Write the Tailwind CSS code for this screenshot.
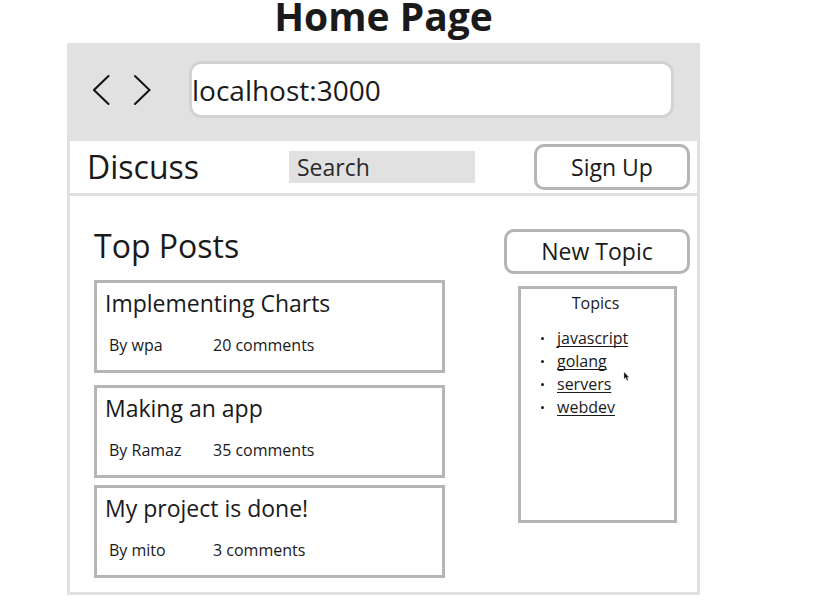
<!DOCTYPE html>
<html lang="en">
<head>
<meta charset="utf-8">
<meta name="viewport" content="width=device-width, initial-scale=1">
<title>Home Page</title>
<script src="https://cdn.jsdelivr.net/npm/@tailwindcss/browser@4"></script>
</head>
<body class="bg-white pl-[67px] pr-[130px] font-['Open_Sans',sans-serif] text-[#1a1a1a]">
  <h1 class="pb-[11px] text-center text-[39px] leading-8 font-bold">Home Page</h1>

  <div class="border-3 border-[#e1e1e1]">
    <header class="flex items-center bg-[#e1e1e1] pt-[15px] pr-[23px] pb-[23px] pl-[23px]">
      <button type="button" aria-label="Back" class="mr-6 shrink-0">
        <svg class="h-8 w-[17px]" viewBox="0 0 17 32" fill="none" stroke="#111" stroke-width="2" stroke-linecap="round"><path d="M15.500 2 1 16 15.500 30"/></svg>
      </button>
      <button type="button" aria-label="Forward" class="mr-[38px] shrink-0">
        <svg class="h-8 w-[17px]" viewBox="0 0 17 32" fill="none" stroke="#111" stroke-width="2" stroke-linecap="round"><path d="M1 2 15.500 16 1 30"/></svg>
      </button>
      <input type="text" aria-label="Address" value="localhost:3000" class="h-[57px] min-w-0 flex-1 rounded-xl border-3 border-[#d3d3d3] bg-white text-[28px] outline-none">
    </header>

    <nav class="flex items-center border-b-3 border-[#e1e1e1] bg-white py-[3px] pr-[7px] pl-[17px]">
      <a href="#" class="w-[202px] shrink-0 text-[32px] leading-10">Discuss</a>
      <input type="search" aria-label="Search" placeholder="Search" class="h-8 w-[186px] bg-[#e1e1e1] px-2 text-[23px] outline-none placeholder:text-[#2a2a2a]">
      <button type="button" class="ml-auto h-[46px] w-[156px] shrink-0 rounded-[10px] border-3 border-[#b5b5b5] text-[23px]">Sign Up</button>
    </nav>

    <div class="flex items-start gap-[59px] pt-[30px] pr-[7px] pb-[14px] pl-6">
      <main class="min-w-0 flex-1">
        <h2 class="pb-[14px] text-[32px] leading-10">Top Posts</h2>
        <article class="mb-3 border-3 border-[#b5b5b5] px-2 pt-1 pb-[13px]">
          <h3 class="text-[23px] leading-8">Implementing Charts</h3>
          <p class="mt-[14px] flex pl-1 text-base"><span class="w-[104px]">By wpa</span><span>20 comments</span></p>
        </article>
        <article class="mb-[7px] border-3 border-[#b5b5b5] px-2 pt-1 pb-[13px]">
          <h3 class="text-[23px] leading-8">Making an app</h3>
          <p class="mt-[14px] flex pl-1 text-base"><span class="w-[104px]">By Ramaz</span><span>35 comments</span></p>
        </article>
        <article class="border-3 border-[#b5b5b5] px-2 pt-1 pb-[13px]">
          <h3 class="text-[23px] leading-8">My project is done!</h3>
          <p class="mt-[14px] flex pl-1 text-base"><span class="w-[104px]">By mito</span><span>3 comments</span></p>
        </article>
      </main>

      <aside class="w-[186px] shrink-0 pt-[3px]">
        <button type="button" class="h-[45px] w-full rounded-[10px] border-3 border-[#b5b5b5] text-[23px]">New Topic</button>
        <section class="relative mt-3 mr-[13px] ml-[14px] min-h-[237px] border-3 border-[#b5b5b5] pt-[2px] pr-1">
          <h4 class="text-center text-base">Topics</h4>
          <ul class="mt-3 text-base leading-[23px]">
            <li class="flex items-center pl-5"><span class="mr-[13px] size-[3px] rounded-full bg-[#1a1a1a]"></span><a href="#" class="underline underline-offset-2 [text-decoration-skip-ink:none]">javascript</a></li>
            <li class="flex items-center pl-5"><span class="mr-[13px] size-[3px] rounded-full bg-[#1a1a1a]"></span><a href="#" class="underline underline-offset-2 [text-decoration-skip-ink:none]">golang</a></li>
            <li class="flex items-center pl-5"><span class="mr-[13px] size-[3px] rounded-full bg-[#1a1a1a]"></span><a href="#" class="underline underline-offset-2 [text-decoration-skip-ink:none]">servers</a></li>
            <li class="flex items-center pl-5"><span class="mr-[13px] size-[3px] rounded-full bg-[#1a1a1a]"></span><a href="#" class="underline underline-offset-2 [text-decoration-skip-ink:none]">webdev</a></li>
          </ul>
          <svg class="absolute top-[82px] left-[102px] h-[11px] w-[7px]" viewBox="0 0 7 11" aria-hidden="true"><path d="M1 1v7l1.600-1.400L4 9.500l1.200-.6L4 6.200h2z" fill="#111" stroke="#bbb" stroke-width=".4"/></svg>
        </section>
      </aside>
    </div>
  </div>
</body>
</html>
